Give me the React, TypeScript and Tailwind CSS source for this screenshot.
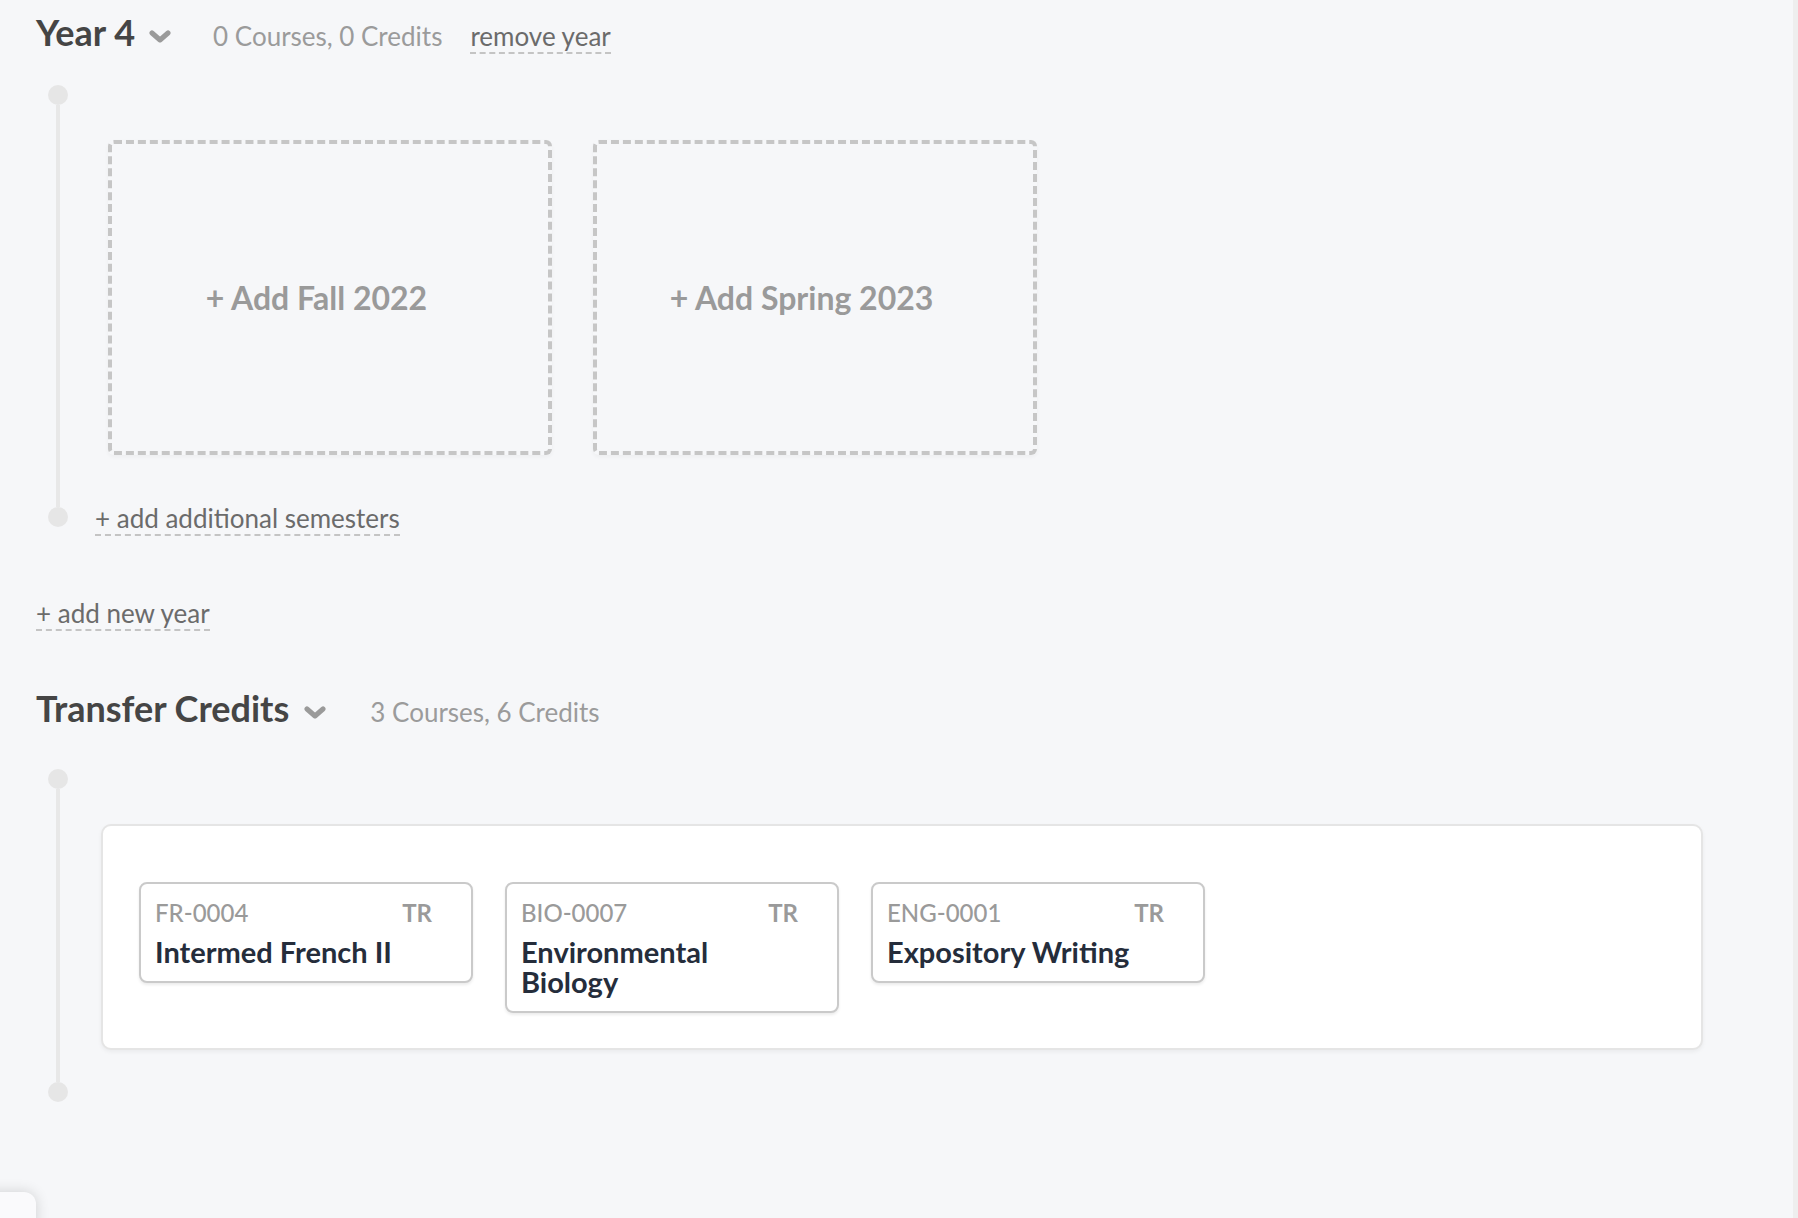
import React from "react";

function Chevron() {
  return (
    <svg
      width="22"
      height="13"
      viewBox="0 0 22 13"
      className="mb-[3px] shrink-0"
      fill="none"
    >
      <path
        d="M3 3 L11 10 L19 3"
        stroke="#9a9a9a"
        strokeWidth="5"
        strokeLinecap="round"
        strokeLinejoin="round"
      />
    </svg>
  );
}

function Rail({ extraBottom }: { extraBottom?: boolean }) {
  return (
    <div
      className={
        extraBottom
          ? "ml-[12px] flex w-[20px] shrink-0 flex-col items-center pb-[9px]"
          : "ml-[12px] flex w-[20px] shrink-0 flex-col items-center"
      }
    >
      <div className="h-5 w-5 shrink-0 rounded-full bg-[#e6e6e6]" />
      <div className="w-1 flex-1 bg-[#e8e8e8]" />
      <div className="h-5 w-5 shrink-0 rounded-full bg-[#e6e6e6]" />
    </div>
  );
}

function AddSemester({ label }: { label: string }) {
  return (
    <div className="flex h-[315px] w-[444px] items-center justify-center rounded-[6px] border-4 border-dashed border-[#c6c6c6] pr-[27px] shadow-[0_2px_4px_rgba(0,0,0,0.04)]">
      <span className="text-[32px] font-bold leading-[38px] text-[#9a9a9a]">
        {label}
      </span>
    </div>
  );
}

function CourseCard({ code, title }: { code: string; title: string }) {
  return (
    <div className="w-[334px] rounded-[8px] border-2 border-[#cacaca] bg-white pb-[14px] pl-[14px] pr-[39px] pt-[15px] shadow-[0_2px_3px_rgba(0,0,0,0.08)]">
      <div className="flex items-baseline justify-between text-[24px] leading-[28.8px] text-[#9a9a9a]">
        <span className="font-medium">{code}</span>
        <span className="font-bold">TR</span>
      </div>
      <div className="mt-[9px] text-[29px] font-bold leading-[30px] text-[#252d3b]">
        {title}
      </div>
    </div>
  );
}

export default function App() {
  return (
    <div className="relative h-[1218px] w-full overflow-hidden border-r-[5px] border-[#eeeeee] bg-[#f6f7f9] font-['Lato','Open_Sans',sans-serif]">
      <div className="pl-9 pt-[11px]">
        {/* Year 4 header */}
        <div className="flex items-baseline">
          <h2 className="text-[36px] font-bold leading-[43.2px] text-[#454545]">
            Year 4
          </h2>
          <span className="ml-[14px]">
            <Chevron />
          </span>
          <span className="ml-[42px] text-[26px] leading-[32px] text-[#9b9b9b]">
            0 Courses, 0 Credits
          </span>
          <span className="ml-[28px] border-b-2 border-dashed border-[#c4c4c4] text-[26px] leading-[32px] text-[#6b6b6b]">
            remove year
          </span>
        </div>

        {/* Year 4 timeline */}
        <div className="mt-[31px] flex">
          <Rail extraBottom />
          <div className="ml-[27px] flex flex-col items-start">
            <div className="ml-[13px] mt-[55px] flex gap-[41px]">
              <AddSemester label="+ Add Fall 2022" />
              <AddSemester label="+ Add Spring 2023" />
            </div>
            <span className="mt-[47px] border-b-2 border-dashed border-[#c4c4c4] text-[26px] leading-[32px] text-[#6b6b6b]">
              + add additional semesters
            </span>
          </div>
        </div>

        {/* add new year */}
        <div className="mt-[61px] flex">
          <span className="border-b-2 border-dashed border-[#c4c4c4] text-[26px] leading-[32px] text-[#6b6b6b]">
            + add new year
          </span>
        </div>

        {/* Transfer credits header */}
        <div className="mt-[56px] flex items-baseline">
          <h2 className="text-[36px] font-bold leading-[43.2px] text-[#454545]">
            Transfer Credits
          </h2>
          <span className="ml-[15px]">
            <Chevron />
          </span>
          <span className="ml-[44px] text-[26px] leading-[32px] text-[#9b9b9b]">
            3 Courses, 6 Credits
          </span>
        </div>

        {/* Transfer timeline */}
        <div className="mt-[39px] flex">
          <Rail />
          <div className="ml-[27px] flex flex-1 flex-col items-start pb-[52px]">
            <div className="ml-[6px] mt-[55px] flex w-[1602px] items-start gap-[32px] rounded-[10px] border-2 border-[#e5e5e5] bg-white pb-[35px] pl-[36px] pt-[56px] shadow-[0_2px_4px_rgba(0,0,0,0.05)]">
              <CourseCard code="FR-0004" title="Intermed French II" />
              <CourseCard code="BIO-0007" title="Environmental Biology" />
              <CourseCard code="ENG-0001" title="Expository Writing" />
            </div>
          </div>
        </div>
      </div>

      {/* floating corner button */}
      <div className="absolute bottom-[-20px] left-[-20px] h-[46px] w-[56px] rounded-[12px] bg-[#fafafc] shadow-[0_0_14px_rgba(0,0,0,0.16)]" />
    </div>
  );
}
